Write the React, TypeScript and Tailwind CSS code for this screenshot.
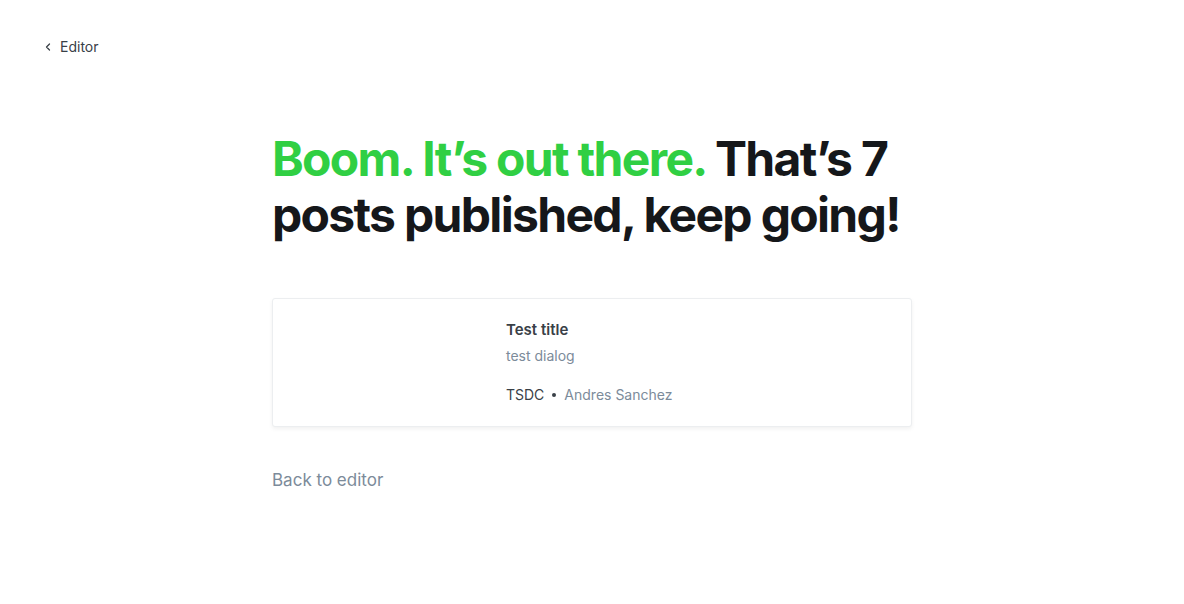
import { ChevronLeft } from "lucide-react";

const App = () => {
  return (
    <div className="min-h-screen bg-white font-['Inter',sans-serif] text-[#15171a]">
      <div className="px-[42px] pt-[36px]">
        <button className="flex items-center gap-[6px] text-[14px] text-[#394047]">
          <ChevronLeft className="h-[12px] w-[12px]" strokeWidth={2.5} />
          Editor
        </button>
      </div>

      <main className="mx-auto mt-[74px] w-[640px]">
        <h1 className="text-[48px] font-bold leading-[56px] tracking-[-0.035em]">
          <span className="text-[#30cf43]">Boom. It’s out there.</span> That’s 7 posts published, keep going!
        </h1>

        <div className="mt-[55px] flex rounded-[3px] border border-[#eceef0] bg-white shadow-[0_2px_4px_rgba(0,0,0,0.06)]">
          <div className="w-[233px] shrink-0" />
          <div className="flex flex-col pb-[21px] pt-[20px]">
            <h2 className="text-[15px] font-semibold leading-[22px] text-[#394047]">Test title</h2>
            <p className="mt-[5px] text-[14px] leading-[20px] text-[#7c8b9a]">test dialog</p>
            <div className="mt-[19px] flex items-center text-[14px] leading-[20px]">
              <span className="text-[#394047]">TSDC</span>
              <span className="mx-[8px] h-[4px] w-[4px] rounded-full bg-[#394047]" />
              <span className="text-[#7c8b9a]">Andres Sanchez</span>
            </div>
          </div>
        </div>

        <button className="mt-[41px] text-[17px] text-[#7c8b9a]">Back to editor</button>
      </main>
    </div>
  );
};

export default App;
